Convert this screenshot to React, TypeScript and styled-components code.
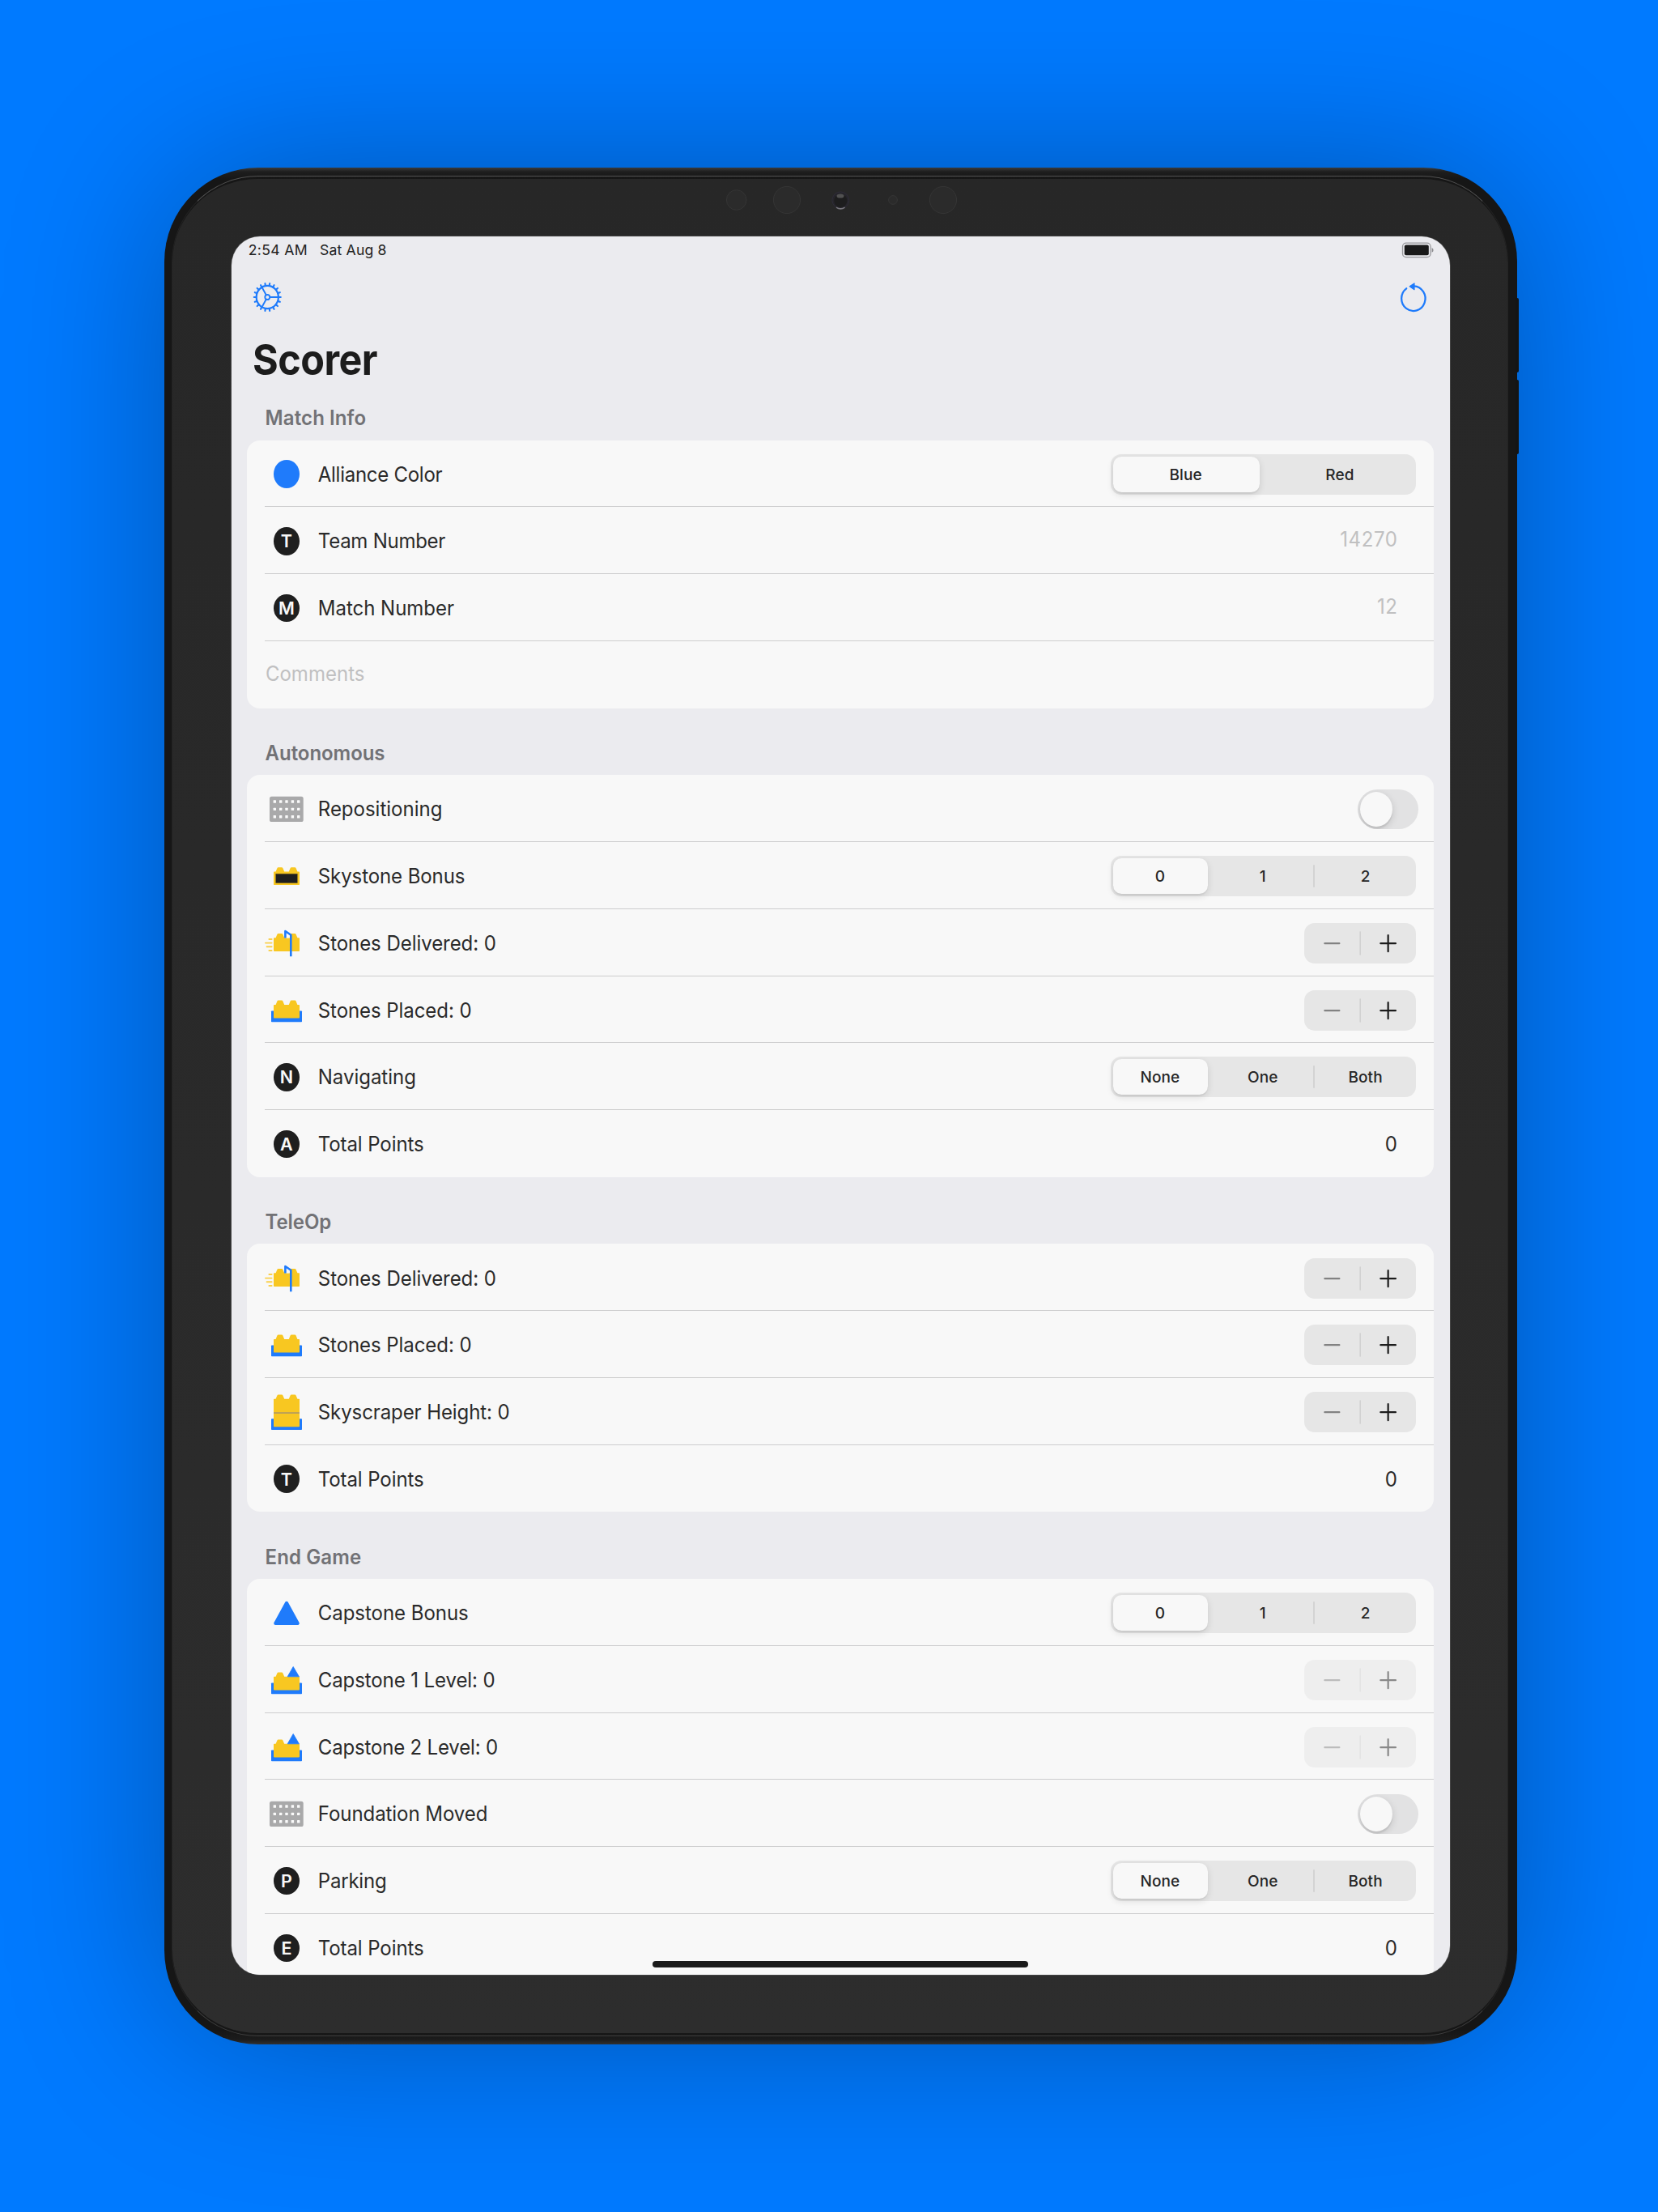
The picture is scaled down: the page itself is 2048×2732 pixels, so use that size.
import React from "react";
import styled, { createGlobalStyle } from "styled-components";

const BLUE = "#1f7bfb";
const YELLOW = "#f8c721";
const INK = "#1f1f1f";
const ROW = 82.74;

const GlobalStyle = createGlobalStyle`
  *, *::before, *::after { box-sizing: border-box; }
  html, body { margin: 0; padding: 0; background: #007aff; }
  body { font-family: Inter, "Liberation Sans", sans-serif; color: #2a2a2a; }
`;

/* ---------- device ---------- */

const Page = styled.main`
  width: 2048px;
  height: 2732px;
  overflow: hidden;
  padding: 207px 0 0 203px;
  background: #007aff;
`;

const Device = styled.div`
  position: relative;
  width: 1671px;
  height: 2318px;
  padding: 85.4px 83px;
  border-radius: 116px;
  background: linear-gradient(#3b3b3b 0, #1e1e1e 5px, #161616 14px, #161616 2300px, #1c1c1c 2312px, #303030 100%);
  box-shadow: 0 0 210px -12px rgba(0, 0, 0, 0.33);
`;

const Rim = styled.div`
  position: absolute;
  inset: 10px 11px 10px 9px;
  border-radius: 107px;
  border: 1px solid;
  border-color: #525252 #232323 #3e3e3e #232323;
`;

const Glass = styled.div`
  position: absolute;
  inset: 14px 12px 14px 10px;
  border-radius: 105px / 103px;
  background: linear-gradient(#272727, #2a2a2a 55%, #2d2d2d);
`;

const SideButton = styled.div<{ $top: number }>`
  position: absolute;
  top: ${(p) => p.$top}px;
  right: -2px;
  width: 4px;
  height: 92px;
  border-radius: 0 2px 2px 0;
  background: #141414;
`;

const Sensors = styled.svg`
  position: absolute;
  top: 20px;
  left: 687px;
  width: 300px;
  height: 40px;
`;

const Screen = styled.section`
  position: relative;
  width: 1504.5px;
  height: 2147px;
  overflow: hidden;
  border-radius: 35px / 36px;
  background: #ebebef;
  box-shadow: 0 0 0 0.6px #5a5a5a;
`;

const HomeIndicator = styled.div`
  position: absolute;
  left: 520px;
  bottom: 9px;
  width: 464px;
  height: 8px;
  border-radius: 4px;
  background: #1a1a1a;
`;

/* ---------- text ---------- */

const Text = styled.span<{ $track?: number }>`
  display: inline-block;
  white-space: nowrap;
  font-size: 24px;
  line-height: 30px;
  letter-spacing: ${(p) => p.$track ?? -0.09}px;
  transform: scaleY(1.072);
`;

const StatusText = styled(Text)`
  font-size: 17.6px;
  line-height: 20px;
  color: #222;
  transform: none;
`;

const PageTitle = styled.h1`
  margin: 0;
  font-size: 48.5px;
  line-height: 32px;
  font-weight: 700;
  letter-spacing: -0.55px;
  color: #1c1c1c;
  transform: scaleY(1.08);
`;

const SectionTitle = styled(Text).attrs({ as: "h2" })`
  margin: 0;
  font-weight: 600;
  color: #727276;
`;

const Label = styled(Text)`
  margin-left: 12.9px;
  flex: 1;
`;

const Placeholder = styled(Text)`
  margin-bottom: 4px;
  color: #c0c0c1;
`;

/* ---------- bars ---------- */

const StatusBar = styled.header`
  height: 33px;
  padding: 0 20px 0 20.7px;
  display: flex;
  align-items: center;
  gap: 15px;
`;

const Battery = styled.svg`
  width: 40px;
  height: 20px;
  margin-left: auto;
`;

const NavBar = styled.nav`
  height: 83px;
  padding: 0 25.5px 0 24px;
  display: flex;
  align-items: center;
  justify-content: space-between;
`;

const BarButton = styled.button`
  width: 40px;
  height: 44px;
  padding: 0;
  border: 0;
  background: none;
  display: flex;
  svg { width: 100%; height: 100%; }
`;

const TitleBar = styled.div`
  height: 52.5px;
  padding: 20px 0 0 26px;
  display: flex;
  align-items: center;
`;

/* ---------- list ---------- */

const SectionHeader = styled.div`
  height: ${ROW}px;
  padding: 28px 0 0 41.6px;
  display: flex;
  align-items: center;
`;

const Card = styled.div`
  margin: 0 19.5px 0 19.3px;
  padding-left: 22px;
  border-radius: 16px;
  background: #f8f8f8;
`;

const Row = styled.div<{ $end: number }>`
  height: ${ROW}px;
  padding: 2.4px ${(p) => p.$end}px 0 0.6px;
  display: flex;
  align-items: center;
  border-bottom: 1px solid #cdcdce;
  &:last-child { border-bottom-color: transparent; }
`;

const IconBox = styled.svg`
  flex: none;
  width: 52px;
  height: 60px;
  overflow: visible;
`;

const LetterSlot = styled.div`
  flex: none;
  width: 52px;
  display: flex;
  justify-content: center;
`;

const LetterBadge = styled.span<{ $color?: string }>`
  width: 32px;
  height: 34.5px;
  border-radius: 50%;
  background: ${(p) => p.$color ?? INK};
  color: #f8f8f8;
  display: flex;
  align-items: center;
  justify-content: center;
  font-size: 21.5px;
  line-height: 30px;
  font-weight: 600;
`;

/* ---------- controls ---------- */

const Segments = styled.div`
  width: 377.5px;
  height: 50px;
  padding: 3px;
  display: flex;
  gap: 9px;
  border-radius: 13px;
  background: #e6e6e6;
`;

const Segment = styled.div<{ $on: boolean; $divided: boolean }>`
  position: relative;
  flex: 1;
  display: flex;
  align-items: center;
  justify-content: center;
  padding: 1px 1px 0 0;
  font-size: 19px;
  font-weight: ${(p) => (p.$on ? 550 : 450)};
  letter-spacing: 0.1px;
  color: #262626;
  border-radius: 10.5px;
  background: ${(p) => (p.$on ? "#f8f8f8" : "none")};
  box-shadow: ${(p) => (p.$on ? "0 3px 8px rgba(0,0,0,.12), 0 2px 1px rgba(0,0,0,.04)" : "none")};
  &::before {
    content: "";
    display: ${(p) => (p.$divided ? "block" : "none")};
    position: absolute;
    left: -6px;
    top: 8px;
    width: 2px;
    height: 28px;
    border-radius: 1px;
    background: #d3d3d3;
  }
`;

const StepperBox = styled.div<{ $off?: boolean }>`
  width: 138.3px;
  height: 50px;
  border-radius: 13px;
  background: #e6e6e6;
  opacity: ${(p) => (p.$off ? 0.5 : 1)};
  svg { display: block; width: 100%; height: 100%; }
`;

const Track = styled.div`
  width: 75px;
  height: 49px;
  padding: 3px;
  border-radius: 24.5px;
  background: #e2e2e3;
  overflow: hidden;
`;

const Knob = styled.div`
  width: 40px;
  height: 43px;
  border-radius: 50%;
  background: #f8f8f8;
  box-shadow: 0 3px 10px rgba(0, 0, 0, 0.15), 0 3px 1px rgba(0, 0, 0, 0.06);
`;

/* ---------- drawings ---------- */

type Icon = "foundation" | "skystone" | "delivered" | "placed" | "tower" | "triangle" | "capstone";

/* a brick with one or two studs, y being the top edge of its body */
const brick = (y: number, bottom: number, studs = 2) =>
  `M10 ${y + 0.8}Q10 ${y} 10.8 ${y}H12.6L14.4 ${y - 4.4}Q14.8 ${y - 5.4} 15.8 ${y - 5.4}H20Q21 ${y - 5.4} 21.4 ${y - 4.4}L23.2 ${y}` +
  (studs === 2
    ? `H28.8L30.6 ${y - 4.4}Q31 ${y - 5.4} 32 ${y - 5.4}H36.2Q37.2 ${y - 5.4} 37.6 ${y - 4.4}L39.4 ${y}`
    : "") +
  `H41.2Q42 ${y} 42 ${y + 0.8}V${bottom - 0.8}Q42 ${bottom} 41.2 ${bottom}H10.8Q10 ${bottom} 10 ${bottom - 0.8}Z`;

const Tray = ({ y }: { y: number }) => <rect x="7" y={y} width="38" height="13.8" rx="0.8" fill={BLUE} />;

function RowIcon({ name }: { name: Icon }) {
  return (
    <IconBox viewBox="0 0 52 60">
      {name === "foundation" && (
        <>
          <rect x="5" y="14.8" width="41.7" height="31.2" rx="2.6" fill="#a9a9aa" />
          {[21, 30.4, 39.8].map((y) =>
            [11.3, 18.7, 26, 33.4, 40.7].map((x) => (
              <rect key={`${x}-${y}`} x={x - 1.7} y={y - 1.7} width="3.4" height="3.4" rx="0.5" fill="#fafafa" />
            ))
          )}
        </>
      )}
      {name === "skystone" && (
        <>
          <path d={brick(24.6, 41.1)} fill={YELLOW} />
          <rect x="12.7" y="27.2" width="26.6" height="11.4" fill="#1e1e1e" stroke="#7a6420" strokeWidth="0.6" />
        </>
      )}
      {name === "delivered" && (
        <>
          <path d={brick(23.3, 40.1)} fill={YELLOW} />
          <path d="M25.2 15.5L31 19.4V23.4H25.2Z" fill="#f8f8f8" />
          <path d="M4.4 25H7.6M0 29.6H7.6M1.6 34.3H7.6M4.4 39H7.6" stroke="#f9d04c" strokeWidth="1.9" strokeLinecap="round" />
          <path d="M24.4 23.6V15L31.3 19.8V46.2" fill="none" stroke={BLUE} strokeWidth="2.6" strokeLinejoin="round" />
        </>
      )}
      {name === "placed" && (
        <>
          <Tray y={30.4} />
          <path d={brick(22.9, 39.5)} fill={YELLOW} />
        </>
      )}
      {name === "tower" && (
        <>
          <Tray y={38.2} />
          <path d={brick(13.8, 48.3)} fill={YELLOW} />
          <rect x="10" y="30.3" width="32" height="1.5" fill="#a8956a" />
        </>
      )}
      {name === "triangle" && (
        <path d="M26 17.8L39.8 43H12.2Z" fill={BLUE} stroke={BLUE} strokeWidth="4" strokeLinejoin="round" />
      )}
      {name === "capstone" && (
        <>
          <Tray y={33.4} />
          <path d={brick(25.8, 42.4, 1)} fill={YELLOW} />
          <path d="M34.2 13.5L41.4 25.8H27.2Z" fill={BLUE} stroke={BLUE} strokeWidth="0.8" strokeLinejoin="round" />
        </>
      )}
    </IconBox>
  );
}

const GearIcon = () => (
  <svg viewBox="0 0 40 44" fill="none" stroke={BLUE}>
    <g transform="translate(20.3 22) scale(1 1.035)">
      <circle r="13.6" strokeWidth="2.2" />
      <circle r="3" strokeWidth="1.9" />
      {[0, 120, 240].map((a) => (
        <path key={a} d="M3.4 0H13" strokeWidth="1.9" transform={`rotate(${a})`} />
      ))}
      {Array.from({ length: 18 }, (_, i) => (
        <path key={i} d="M14 0H16.5" strokeWidth="2.1" strokeLinecap="round" transform={`rotate(${i * 20})`} />
      ))}
    </g>
  </svg>
);

const ResetIcon = () => (
  <svg viewBox="0 0 40 44" fill="none">
    <path
      d="M21.5 8.4A14.7 15.3 0 1 1 12.2 11.3"
      stroke={BLUE}
      strokeWidth="2.3"
      strokeLinecap="round"
    />
    <path d="M16.2 8.8L22 4.9V12.7Z" fill={BLUE} stroke={BLUE} strokeWidth="1.2" strokeLinejoin="round" />
  </svg>
);

/* ---------- rows ---------- */

type Control =
  | { kind: "segments"; options: string[] }
  | { kind: "stepper"; off?: boolean }
  | { kind: "toggle" }
  | { kind: "placeholder"; value: string }
  | { kind: "value"; value: string };

interface RowData {
  label: string;
  track?: number;
  icon?: Icon;
  letter?: string;
  dot?: boolean;
  control?: Control;
}

const SECTIONS: { title: string; track: number; rows: RowData[] }[] = [
  {
    title: "Match Info",
    track: 0.1,
    rows: [
      { label: "Alliance Color", track: -0.27, dot: true, control: { kind: "segments", options: ["Blue", "Red"] } },
      { label: "Team Number", track: -0.25, letter: "T", control: { kind: "placeholder", value: "14270" } },
      { label: "Match Number", track: -0.02, letter: "M", control: { kind: "placeholder", value: "12" } },
      { label: "Comments", track: 0.02 },
    ],
  },
  {
    title: "Autonomous",
    track: -0.05,
    rows: [
      { label: "Repositioning", track: 0, icon: "foundation", control: { kind: "toggle" } },
      { label: "Skystone Bonus", icon: "skystone", control: { kind: "segments", options: ["0", "1", "2"] } },
      { label: "Stones Delivered: 0", track: -0.05, icon: "delivered", control: { kind: "stepper" } },
      { label: "Stones Placed: 0", track: -0.07, icon: "placed", control: { kind: "stepper" } },
      { label: "Navigating", track: -0.02, letter: "N", control: { kind: "segments", options: ["None", "One", "Both"] } },
      { label: "Total Points", letter: "A", control: { kind: "value", value: "0" } },
    ],
  },
  {
    title: "TeleOp",
    track: -0.07,
    rows: [
      { label: "Stones Delivered: 0", track: -0.05, icon: "delivered", control: { kind: "stepper" } },
      { label: "Stones Placed: 0", track: -0.07, icon: "placed", control: { kind: "stepper" } },
      { label: "Skyscraper Height: 0", icon: "tower", control: { kind: "stepper" } },
      { label: "Total Points", letter: "T", control: { kind: "value", value: "0" } },
    ],
  },
  {
    title: "End Game",
    track: 0.1,
    rows: [
      { label: "Capstone Bonus", track: -0.04, icon: "triangle", control: { kind: "segments", options: ["0", "1", "2"] } },
      { label: "Capstone 1 Level: 0", icon: "capstone", control: { kind: "stepper", off: true } },
      { label: "Capstone 2 Level: 0", track: -0.17, icon: "capstone", control: { kind: "stepper", off: true } },
      { label: "Foundation Moved", track: -0.06, icon: "foundation", control: { kind: "toggle" } },
      { label: "Parking", track: -0.2, letter: "P", control: { kind: "segments", options: ["None", "One", "Both"] } },
      { label: "Total Points", letter: "E", control: { kind: "value", value: "0" } },
    ],
  },
];

const END_PADDING = { segments: 22, stepper: 22, toggle: 19, placeholder: 44.5, value: 45 };

function RowControl({ control }: { control: Control }) {
  switch (control.kind) {
    case "segments":
      return (
        <Segments>
          {control.options.map((o, i) => (
            <Segment key={o} $on={i === 0} $divided={i === 2}>
              {o}
            </Segment>
          ))}
        </Segments>
      );
    case "stepper":
      return (
        <StepperBox $off={control.off}>
          <svg viewBox="0 0 138 50" strokeLinecap="round">
            <path d="M25.2 25.2H43.2" stroke="#828282" strokeWidth="2.2" />
            <path d="M69 11V39" stroke="#cfcfcf" strokeWidth="1.4" />
            <path d="M94.2 25.2H112.8M103.5 15.2V35.2" stroke="#1c1c1c" strokeWidth="2.2" />
          </svg>
        </StepperBox>
      );
    case "toggle":
      return (
        <Track>
          <Knob />
        </Track>
      );
    case "placeholder":
      return <Placeholder $track={0.6}>{control.value}</Placeholder>;
    case "value":
      return <Text $track={0}>{control.value}</Text>;
  }
}

function ListRow({ row }: { row: RowData }) {
  if (!row.control) {
    return (
      <Row $end={0}>
        <Placeholder $track={row.track}>{row.label}</Placeholder>
      </Row>
    );
  }
  return (
    <Row $end={END_PADDING[row.control.kind]}>
      {row.icon ? (
        <RowIcon name={row.icon} />
      ) : (
        <LetterSlot>
          <LetterBadge $color={row.dot ? BLUE : undefined}>{row.letter}</LetterBadge>
        </LetterSlot>
      )}
      <Label $track={row.track}>{row.label}</Label>
      <RowControl control={row.control} />
    </Row>
  );
}

export default function App() {
  return (
    <Page>
      <GlobalStyle />
      <Device>
        <SideButton $top={161} />
        <SideButton $top={262} />
        <Rim />
        <Glass />
        <Sensors viewBox="0 0 300 40" fill="#2b2b2b" stroke="#353535">
          <circle cx="19.7" cy="20" r="12.3" />
          <circle cx="82" cy="20" r="16.6" />
          <circle cx="148.3" cy="20.3" r="10.4" fill="#26252b" stroke="#2e2c38" />
          <circle cx="148.3" cy="21" r="8" fill="#1d1d1e" stroke="none" />
          <ellipse cx="148" cy="15" rx="4.5" ry="2.6" fill="#515151" stroke="none" />
          <path d="M143 29.2Q148.3 32.6 153.6 29.2" fill="none" stroke="#77757c" strokeWidth="1.6" />
          <circle cx="213" cy="20" r="5.4" />
          <circle cx="275" cy="20" r="16.6" />
        </Sensors>
        <Screen>
          <StatusBar>
            <StatusText $track={0.34}>2:54 AM</StatusText>
            <StatusText $track={0.19}>Sat Aug 8</StatusText>
            <Battery viewBox="0 0 40 20">
              <rect x="1.5" y="1.2" width="34.6" height="17.4" rx="4.4" fill="none" stroke="#98989b" strokeWidth="1.3" />
              <rect x="3.8" y="3.6" width="30" height="12.6" rx="2" fill="#1a1a1a" />
              <path d="M37.6 7Q39.6 8 39.6 9.9T37.6 12.8Z" fill="#8c8c8f" />
            </Battery>
          </StatusBar>
          <NavBar>
            <BarButton aria-label="Settings">
              <GearIcon />
            </BarButton>
            <BarButton aria-label="Reset">
              <ResetIcon />
            </BarButton>
          </NavBar>
          <TitleBar>
            <PageTitle>Scorer</PageTitle>
          </TitleBar>
          {SECTIONS.map((s) => (
            <section key={s.title}>
              <SectionHeader>
                <SectionTitle $track={s.track}>{s.title}</SectionTitle>
              </SectionHeader>
              <Card>
                {s.rows.map((r) => (
                  <ListRow key={r.label} row={r} />
                ))}
              </Card>
            </section>
          ))}
          <HomeIndicator />
        </Screen>
      </Device>
    </Page>
  );
}
